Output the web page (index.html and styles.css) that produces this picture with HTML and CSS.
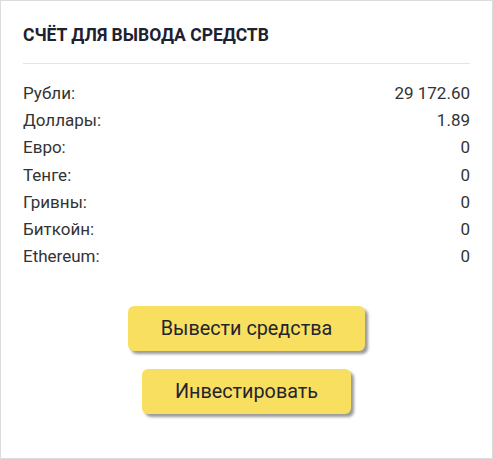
FILE: index.html
```html
<!DOCTYPE html>
<html lang="ru">
<head>
    <meta charset="UTF-8">
    <meta name="viewport" content="width=device-width, initial-scale=1.0">
    <title>Счёт для вывода средств</title>
    <link rel="stylesheet" href="styles.css">
</head>
<body>
<div class="card">
    <h2 class="card-title">Счёт для вывода средств</h2>

    <!-- Balances -->
    <ul class="balances">
        <li><span>Рубли:</span><span>29 172.60</span></li>
        <li><span>Доллары:</span><span>1.89</span></li>
        <li><span>Евро:</span><span>0</span></li>
        <li><span>Тенге:</span><span>0</span></li>
        <li><span>Гривны:</span><span>0</span></li>
        <li><span>Биткойн:</span><span>0</span></li>
        <li><span>Ethereum:</span><span>0</span></li>
    </ul>

    <div class="actions">
        <button class="btn">Вывести средства</button>
        <button class="btn">Инвестировать</button>
    </div>
</div>
</body>
</html>
```

FILE: styles.css
```css
* {
    box-sizing: border-box;
}
body {
    font-family: Roboto, "Liberation Sans", Arial, sans-serif;
    margin: 0;
    background: #fff;
}
.card {
    width: 493px;
    height: 459px;
    border: 1px solid #dcdcdc;
    padding: 24px 22px 0 22px;
}
.card-title {
    margin: 0;
    padding-bottom: 18px;
    border-bottom: 1px solid #e4e4e4;
    font-size: 17.5px;
    line-height: 20px;
    font-weight: 700;
    text-transform: uppercase;
    color: #1e2130;
}
.balances {
    list-style: none;
    margin: 0;
    padding: 16px 0 0 0;
}
.balances li {
    display: flex;
    justify-content: space-between;
    font-size: 17px;
    line-height: 27.2px;
    color: #333;
}
.actions {
    display: flex;
    flex-direction: column;
    align-items: center;
    gap: 18px;
    margin-top: 36px;
}
.btn {
    height: 45px;
    padding: 0 33px;
    font-family: inherit;
    font-size: 19.8px;
    font-weight: 400;
    color: #23242e;
    background-color: #f9df5f;
    border: none;
    border-radius: 6px;
    box-shadow: 3px 3px 3px rgba(0, 0, 0, 0.4);
    cursor: pointer;
}
.btn:hover {
    background-color: #f5d63e;
}
```
